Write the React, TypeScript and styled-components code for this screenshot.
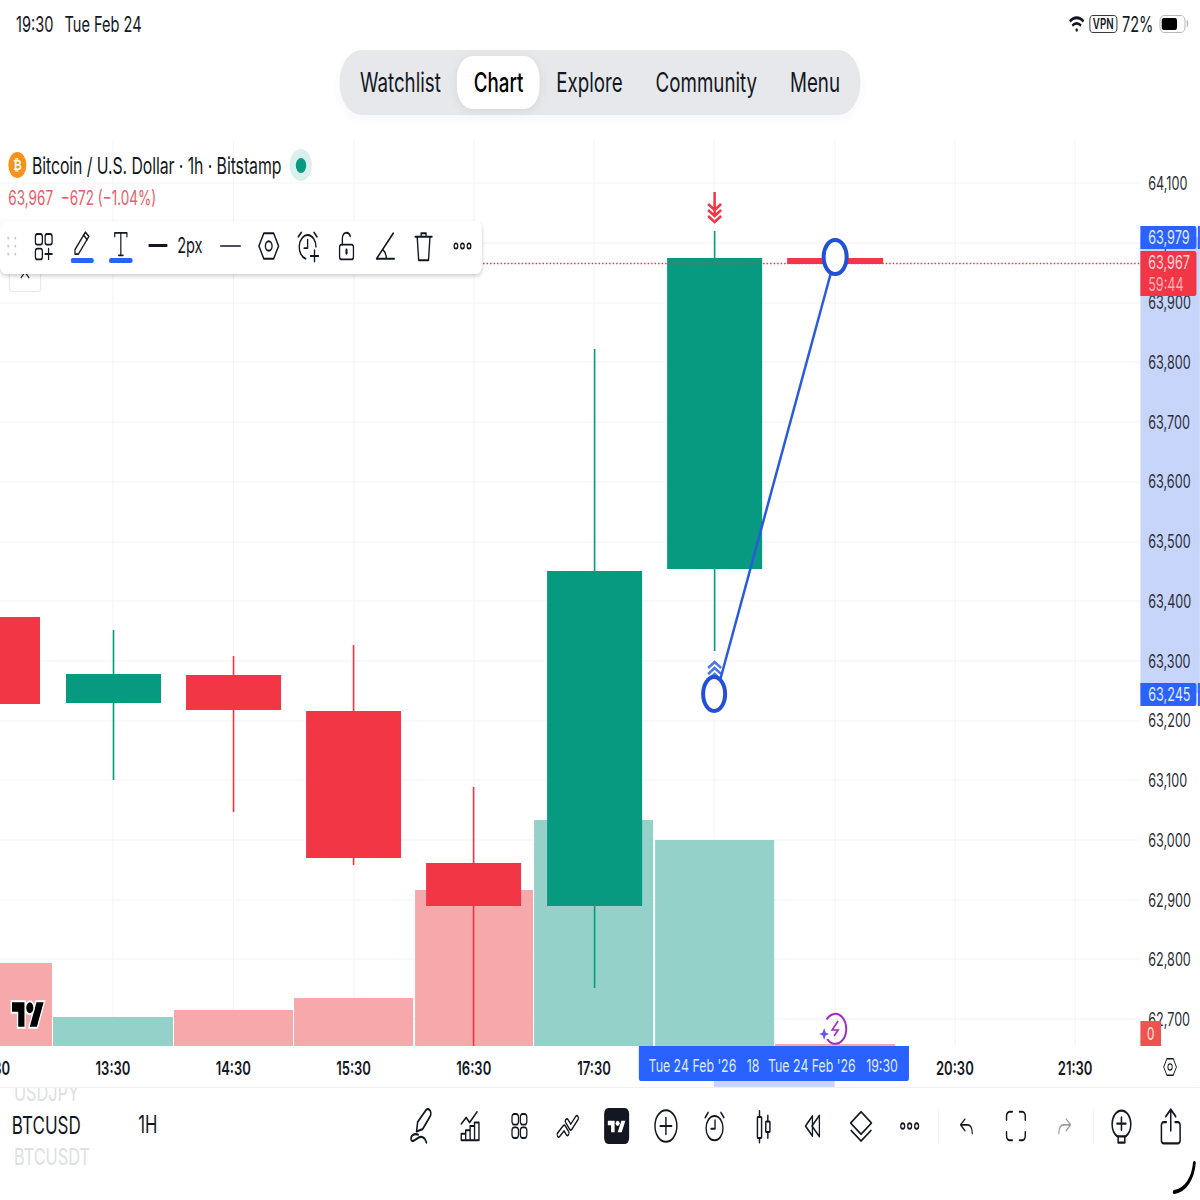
import React from 'react';
import styled, { createGlobalStyle } from 'styled-components';

// The screenshot is a tablet capture squeezed to a square, so the page is laid
// out 1728 wide and narrowed as a whole. The chart svg uses screenshot pixels.
const PRICES = ['64,100', '64,000', '63,900', '63,800', '63,700', '63,600', '63,500', '63,400', '63,300', '63,200', '63,100', '63,000', '62,900', '62,800', '62,700'];
// the two empty cells sit under the crosshair tag
const TIMES = ['12:30', '13:30', '14:30', '15:30', '16:30', '17:30', '', '', '20:30', '21:30'];
const GRID_X = [113, 233.5, 354, 474, 594, 714, 835, 955, 1075];
const GRID_Y = [183, 243, 303, 362, 422, 482, 542, 601, 661, 721, 780, 840, 900, 959, 1019];
const GREEN = '#089981';
const RED = '#f23645';

const VOLUMES = [
  { x: 0, w: 52, y: 963, up: false },
  { x: 53, w: 120, y: 1017, up: true },
  { x: 174, w: 119, y: 1010, up: false },
  { x: 294, w: 119, y: 998, up: false },
  { x: 415, w: 118, y: 890, up: false },
  { x: 534, w: 119, y: 820, up: true },
  { x: 655, w: 119, y: 840, up: true },
  { x: 775, w: 120, y: 1044, up: false },
];

const CANDLES = [
  { x: -55, wick: -7, top: 617, bottom: 704, wickTop: 617, wickBottom: 704, up: false },
  { x: 66, wick: 113, top: 674, bottom: 703, wickTop: 630, wickBottom: 780, up: true },
  { x: 186, wick: 233, top: 675, bottom: 710, wickTop: 656, wickBottom: 812, up: false },
  { x: 306, wick: 353, top: 711, bottom: 858, wickTop: 645, wickBottom: 865, up: false },
  { x: 426, wick: 473, top: 863, bottom: 906, wickTop: 787, wickBottom: 1046, up: false },
  { x: 547, wick: 594, top: 571, bottom: 906, wickTop: 349, wickBottom: 988, up: true },
  { x: 667, wick: 714, top: 258, bottom: 569, wickTop: 231, wickBottom: 651, up: true },
];

const GlobalStyle = createGlobalStyle`
  html, body {
    margin: 0;
    overflow: hidden;
    background: #fff;
  }
  body {
    font-family: Inter, "Liberation Sans", sans-serif;
    color: #131722;
  }
`;

const Page = styled.div`
  width: 1728px;
  height: 1200px;
  overflow: hidden;
  background: #fff;
  transform: scaleX(0.6944);
  transform-origin: 0 0;
  position: relative;
`;

const StatusBar = styled.div`
  height: 48px;
  display: flex;
  align-items: center;
  justify-content: space-between;
  padding: 0 21px 0 23px;
  box-sizing: border-box;
  font-size: 21px;
`;

const StatusGroup = styled.div`
  display: flex;
  align-items: center;
  gap: 16px;
`;

const StatusIcons = styled(StatusGroup)`
  gap: 7px;
`;

const Vpn = styled.span`
  border: 1.5px solid #131722;
  border-radius: 5px;
  font-size: 14px;
  font-weight: 600;
  line-height: 16px;
  padding: 0 4px;
`;

const Battery = styled.span`
  width: 37px;
  height: 18px;
  box-sizing: border-box;
  border: 1.5px solid #a9abb0;
  border-radius: 6px;
  padding: 2px;
  margin-left: 2px;
  position: relative;
  display: block;

  &::before {
    content: '';
    display: block;
    width: 72%;
    height: 100%;
    background: #000;
    border-radius: 3px;
  }

  &::after {
    content: '';
    position: absolute;
    right: -5px;
    top: 4px;
    width: 2px;
    height: 7px;
    background: #b5b7bb;
    border-radius: 0 2px 2px 0;
  }
`;

const NavRow = styled.div`
  height: 92px;
  display: flex;
  justify-content: center;
  align-items: flex-start;
  padding-top: 2px;
  box-sizing: border-box;
`;

const Nav = styled.nav`
  height: 65px;
  box-sizing: border-box;
  padding: 6px;
  background: #e6e8ec;
  border-radius: 32px;
  display: flex;
  box-shadow: 0 4px 14px rgba(0, 0, 0, 0.04);
`;

const NavItem = styled.div<{ $active?: boolean }>`
  display: flex;
  align-items: center;
  padding: 0 23.7px;
  font-size: 27px;
  font-weight: ${(p) => (p.$active ? 500 : 400)};
  color: ${(p) => (p.$active ? '#000' : '#131722')};
  background: ${(p) => (p.$active ? '#fff' : 'transparent')};
  border-radius: 22px;
  box-shadow: ${(p) => (p.$active ? '0 2px 14px rgba(0,0,0,0.07)' : 'none')};
`;

const ChartBlock = styled.div`
  display: grid;
  grid-template-columns: 1642px 86px;
  grid-template-rows: 906px 41px;
  position: relative;
`;

const Plot = styled.div`
  position: relative;
`;

const PlotSvg = styled.svg`
  display: block;
  width: 100%;
  height: 100%;
`;

const Legend = styled.div`
  position: absolute;
  left: 12px;
  top: 9px;
  display: flex;
  flex-direction: column;
  gap: 1px;
`;

const LegendTitle = styled.div`
  display: flex;
  align-items: center;
  height: 32px;
  font-size: 22.8px;
  letter-spacing: -0.1px;
`;

const CoinBadge = styled.span`
  width: 26px;
  height: 26px;
  margin-right: 8px;
  border-radius: 50%;
  background: #f7931a;
  color: #fff;
  font-family: 'DejaVu Sans', sans-serif;
  font-size: 15px;
  font-weight: 700;
  display: flex;
  align-items: center;
  justify-content: center;
`;

const StatusDot = styled.span`
  width: 32px;
  height: 32px;
  margin-left: 12px;
  border-radius: 50%;
  background: #daf0ec;
  display: flex;
  align-items: center;
  justify-content: center;

  &::before {
    content: '';
    width: 15px;
    height: 15px;
    border-radius: 50%;
    background: ${GREEN};
  }
`;

const LegendValues = styled.div`
  font-size: 19.5px;
  color: #f0596a;
  line-height: 32px;
  white-space: pre;
`;

const HiddenButton = styled.div`
  position: absolute;
  left: 13px;
  top: 122px;
  width: 46px;
  height: 30px;
  box-sizing: border-box;
  border: 1px solid #e0e3eb;
  border-radius: 4px;
  background: #fff;
  display: flex;
  justify-content: center;
  align-items: flex-start;
  padding-top: 7px;
`;

const DrawToolbar = styled.div`
  position: absolute;
  left: 0;
  top: 81px;
  width: 694px;
  height: 53px;
  padding-bottom: 4px;
  box-sizing: border-box;
  background: #fff;
  border-radius: 8px;
  box-shadow: 0 2px 5px rgba(0, 0, 0, 0.2);
  display: flex;
  align-items: center;
`;

const Handle = styled.div`
  width: 35px;
  display: flex;
  justify-content: center;
`;

const Tool = styled.div<{ $selected?: boolean }>`
  width: 56px;
  height: 49px;
  display: flex;
  align-items: center;
  justify-content: center;
  position: relative;
  padding-bottom: ${(p) => (p.$selected ? '3px' : '0')};
  box-sizing: border-box;

  &::after {
    content: ${(p) => (p.$selected ? "''" : 'none')};
    position: absolute;
    left: 11px;
    right: 11px;
    bottom: 7px;
    height: 5px;
    border-radius: 3px;
    background: #2962ff;
  }
`;

const LineWidth = styled.div`
  width: 102px;
  display: flex;
  align-items: center;
  justify-content: center;
  gap: 14px;
  font-size: 21px;

  &::before {
    content: '';
    width: 27px;
    height: 3px;
    background: #131722;
  }
`;

const PriceAxis = styled.div`
  position: relative;
  padding-top: 13.5px;
  box-sizing: border-box;
  overflow: hidden;
`;

const PriceRange = styled.div`
  position: absolute;
  left: 0;
  right: 0;
  top: 97px;
  height: 456px;
  background: #c7d5fa;
`;

const PriceLabel = styled.div`
  position: relative;
  height: 59.75px;
  line-height: 59.75px;
  padding-left: 11.5px;
  font-size: 18.2px;
  color: #2a2e39;
`;

const PriceTag = styled.div<{ $color: string }>`
  position: absolute;
  left: 0;
  width: 81px;
  box-sizing: border-box;
  padding-left: 11.5px;
  background: ${(p) => p.$color};
  border-radius: 0 3px 3px 0;
  font-size: 18.2px;
  line-height: 23px;
  color: #e2e9ff;
`;

const BlueTag = styled(PriceTag)`
  &::after {
    content: '';
    position: absolute;
    left: 83px;
    top: 0;
    width: 5px;
    height: 100%;
    background: #2962ff;
  }
`;

const Countdown = styled.div`
  color: #ffb0b5;
  line-height: 20px;
`;

const ZeroTag = styled.div`
  position: absolute;
  left: 0;
  top: 881px;
  width: 30px;
  height: 25px;
  background: #ef5350;
  color: #ffe3e3;
  font-size: 17px;
  display: flex;
  align-items: center;
  justify-content: center;
`;

const TimeAxis = styled.div`
  position: relative;
  display: flex;
  overflow: hidden;
`;

const TimeLabel = styled.div`
  flex: 0 0 173.2px;
  height: 41px;
  display: flex;
  align-items: center;
  justify-content: center;
  font-size: 18.8px;
  font-weight: 600;
  padding-top: 3px;
  box-sizing: border-box;

  &:first-child {
    margin-left: -97px;
  }
`;

const TimeRange = styled.div`
  position: absolute;
  left: 1028px;
  width: 174px;
  top: 35px;
  height: 6px;
  background: #c7d5fa;
`;

const TimeTag = styled.div`
  position: absolute;
  left: 920px;
  top: 0;
  width: 389px;
  height: 35px;
  padding-top: 3px;
  box-sizing: border-box;
  background: #2962ff;
  border-radius: 0 0 3px 3px;
  color: #dfe8ff;
  font-size: 17.8px;
  display: flex;
  align-items: center;
  white-space: pre;
`;

const TimeTagClipped = styled.div`
  width: 174px;
  margin-right: 12px;
  flex: none;
  padding-left: 14px;
  box-sizing: border-box;
  overflow: hidden;
`;

const AxisCorner = styled.div`
  display: flex;
  align-items: center;
  padding-left: 32px;
`;

const BottomBar = styled.div`
  height: 113px;
  border-top: 1.5px solid #eef0f3;
  box-sizing: border-box;
  display: flex;
  position: relative;
`;

const Symbols = styled.div`
  width: 199px;
  padding-left: 17px;
  box-sizing: border-box;
  overflow: hidden;
`;

const SymbolItem = styled.div<{ $current?: boolean }>`
  height: 32px;
  line-height: 32px;
  padding-left: ${(p) => (p.$current ? '0' : '3px')};
  font-size: ${(p) => (p.$current ? '24.5px' : '23.5px')};
  color: ${(p) => (p.$current ? '#131722' : '#dedfe2')};
  white-space: nowrap;

  &:first-child {
    margin-top: -11px;
  }
`;

const Interval = styled.div`
  width: 373px;
  font-size: 24px;
  line-height: 32px;
  padding-top: 21px;
  box-sizing: border-box;
`;

const Actions = styled.div`
  display: flex;
  align-items: flex-start;
  padding-top: 20px;
`;

const ActionCell = styled.div`
  width: 70.3px;
  height: 36px;
  display: flex;
  align-items: center;
  justify-content: center;
`;

const Separator = styled.div`
  width: 12px;
  height: 36px;
  display: flex;
  justify-content: center;

  &::before {
    content: '';
    width: 1px;
    background: #f1f2f4;
  }
`;

const TvButton = styled.div`
  width: 36px;
  height: 36px;
  background: #131722;
  border-radius: 6px;
  display: flex;
  align-items: center;
  justify-content: center;
`;

const HomeCorner = styled.svg`
  position: absolute;
  right: 4px;
  bottom: 6px;
  width: 36px;
  height: 34px;
`;

const Stroke = styled.svg<{ $muted?: boolean }>`
  display: block;
  fill: none;
  stroke: ${(p) => (p.$muted ? '#9a9da3' : '#131722')};
  stroke-width: 1.4;
  stroke-linecap: round;
  stroke-linejoin: round;
`;

const Icon = ({ size = 32, muted, children }: { size?: number; muted?: boolean; children: React.ReactNode }) => (
  <Stroke $muted={muted} width={size} height={size} viewBox="0 0 24 24">
    {children}
  </Stroke>
);

const TvLogo = ({ width, height, color }: { width: number; height: number; color: string }) => (
  <svg width={width} height={height} viewBox="0 3 36 20" preserveAspectRatio="none" fill={color}>
    <path d="M14 22H7V11H0V4h14v18zM28 22h-8l7.5-18h8L28 22z" />
    <circle cx="20" cy="8" r="4" />
  </svg>
);

const HexIcon = ({ size = 32 }: { size?: number }) => (
  <Icon size={size}>
    <path d="M7 3h10l5 9-5 9H7l-5-9z" />
    <circle cx="12" cy="12" r="3.4" />
  </Icon>
);

const DotsIcon = ({ size = 32 }: { size?: number }) => (
  <Icon size={size}>
    <circle cx="4.5" cy="12" r="2.1" />
    <circle cx="12" cy="12" r="2.1" />
    <circle cx="19.5" cy="12" r="2.1" />
  </Icon>
);

const BOTTOM_LEFT: React.ReactNode[] = [
  <Icon size={38} key="brush">
    <path d="M7.500 15.500 8.500 9.500 15.500 2.500a2.500 2.500 0 0 1 4.500 3.200L13 14z" />
    <path d="M9 17.500C5.500 16.500 2 18 2.500 20.500c.5 2 3.500.4 6-.8 3.200-1.500 6.500-1 8 2.800" />
  </Icon>,
  <Icon size={34} key="bars">
    <path d="M3 10.500 8 6l3.500 3.500L19 2" />
    <path d="M3 22v-4.500h4.500V22M7.500 22v-7H12v7M12 22V12h4.500v10M16.500 22V9.500H21V22H3" />
  </Icon>,
  <Icon size={32} key="grid">
    <rect x="4" y="3" width="7" height="8" rx="2.400" />
    <rect x="13" y="3" width="7" height="8" rx="2.400" />
    <rect x="4" y="13" width="7" height="8" rx="2.400" />
    <rect x="13" y="13" width="7" height="8" rx="2.400" />
  </Icon>,
  <Icon size={38} key="patterns">
    <path d="M3.500 17.500 8.500 13l3 3.500M11 9l3.500 4L20 7" strokeWidth="4" />
    <path d="M3.500 17.500 8.500 13l3 3.500M11 9l3.500 4L20 7" strokeWidth="1.800" stroke="#fff" />
  </Icon>,
  <TvButton key="tv">
    <TvLogo width={26} height={13} color="#fff" />
  </TvButton>,
  <Icon size={36} key="plus">
    <circle cx="12" cy="12" r="10.500" />
    <path d="M12 6.500v11M6.500 12h11" />
  </Icon>,
  <Icon size={34} key="alarm">
    <circle cx="12" cy="13.500" r="8.600" />
    <path d="M12.500 8v6H8.500M2.500 6 5.500 2.500M21.500 6l-3-3.500" />
  </Icon>,
  <Icon size={36} key="candles">
    <path d="M8.500 2v4M8.500 20v3M16.500 5v4M16.500 16v4" />
    <rect x="6.500" y="6" width="4" height="14" rx="0.500" />
    <rect x="14.500" y="9" width="4" height="7" rx="0.500" />
  </Icon>,
  <Icon size={32} key="replay">
    <path d="M12 4.500 4.500 12l7.500 7.500z" />
    <path d="M19.500 4 11.500 12l8 8z" />
  </Icon>,
  <Icon size={36} key="layers">
    <path d="M12 2.500 22 10l-10 7.500L2 10z" />
    <path d="M2.500 15 12 22l9.500-7" />
  </Icon>,
  <DotsIcon key="more" />,
];

const DrawTools = () => (
  <DrawToolbar>
    <Handle>
      <svg width="14" height="20" viewBox="0 0 14 20" fill="#c9ccd3">
        {[2, 10, 18].flatMap((y) => [2, 12].map((x) => <circle key={`${x}-${y}`} cx={x} cy={y} r="1.600" />))}
      </svg>
    </Handle>
    <Tool>
      <Icon size={32}>
        <rect x="3" y="3" width="7.500" height="8" rx="2" />
        <rect x="13.500" y="3" width="7.500" height="8" rx="2" />
        <rect x="3" y="14" width="7.500" height="8" rx="2" />
        <path d="M17.200 14v8M13.500 18h7.500" />
      </Icon>
    </Tool>
    <Tool $selected>
      <Icon size={30}>
        <path d="M4 16.500 16 2.500l4 3.500L8 20H4z" />
        <path d="m14 5 4 3.500" />
      </Icon>
    </Tool>
    <Tool $selected>
      <Icon size={30}>
        <path d="M5 6V3h14v3M12 3v18M9.500 21h5" />
      </Icon>
    </Tool>
    <LineWidth>2px</LineWidth>
    <Tool>
      <Icon size={36}>
        <path d="M2.500 12h19" strokeWidth="1" />
      </Icon>
    </Tool>
    <Tool>
      <HexIcon size={34} />
    </Tool>
    <Tool>
      <Icon size={34}>
        <path d="M10 21A8.500 8.500 0 1 1 20.500 12.500" />
        <path d="M12 7.500v6H8.500M2.500 5.500 5.500 2.500M21.500 5.500l-3-3M19 15v8M15 19h8" />
      </Icon>
    </Tool>
    <Tool>
      <Icon size={32}>
        <rect x="4.500" y="11" width="15" height="11" rx="2" />
        <path d="M7.500 11V6.500a4.500 4.500 0 0 1 8.600-1.800" />
        <path d="M12 15v2.500" strokeWidth="2.200" />
      </Icon>
    </Tool>
    <Tool>
      <Icon size={34}>
        <path d="M20 3 3 21h18M13 21c0-2.600-1-4.600-3-6" />
      </Icon>
    </Tool>
    <Tool>
      <Icon size={34}>
        <path d="M3.500 5.500h17M9.500 5.500V3h5v2.500M5.500 5.500 7 22h10l1.500-16.500" />
      </Icon>
    </Tool>
    <Tool>
      <DotsIcon size={30} />
    </Tool>
  </DrawToolbar>
);

const Chart = () => (
  <PlotSvg viewBox="0 140 1140 906" preserveAspectRatio="none">
    <g stroke="#f2f3f5" strokeWidth="1">
      {GRID_X.map((x) => <line key={x} x1={x} x2={x} y1={140} y2={1046} />)}
      {GRID_Y.map((y) => <line key={y} x1={0} x2={1140} y1={y} y2={y} />)}
    </g>
    {VOLUMES.map((v) => (
      <rect key={v.x} x={v.x} y={v.y} width={v.w} height={1046 - v.y} fill={v.up ? '#94d1c8' : '#f7a8ab'} />
    ))}
    {CANDLES.map((c) => (
      <g key={c.x} fill={c.up ? GREEN : RED}>
        <rect x={c.wick - 0.3} y={c.wickTop} width="1.6" height={c.wickBottom - c.wickTop} />
        <rect x={c.x} y={c.top} width="95" height={c.bottom - c.top} />
      </g>
    ))}
    <line x1="0" x2="1140" y1="263.500" y2="263.500" stroke={RED} strokeWidth="1.500" strokeDasharray="1.500 2" />
    <rect x="787" y="258" width="96" height="6" fill={RED} />
    <path d="M714.500 192v24M708 204l6.500 6 6.500-6M708 210l6.500 6 6.500-6M708 216l6.500 6 6.500-6" fill="none" stroke={RED} strokeWidth="2.500" />
    <path d="M708 668l6.500-6 6.500 6M708 674l6.500-6 6.500 6M708 680l6.500-6 6.500 6" fill="none" stroke="#4a78f0" strokeWidth="2.500" />
    <line x1="720" y1="680" x2="831" y2="272" stroke="#2a5bde" strokeWidth="2.500" />
    <ellipse cx="835" cy="257" rx="11.500" ry="17" fill="#fff" stroke="#2450d8" strokeWidth="4" />
    <ellipse cx="714" cy="694" rx="11" ry="17" fill="#fff" stroke="#2450d8" strokeWidth="4" />
    <g transform="translate(12 1001)">
      <g transform="scale(0.89 1.35)" fill="#000" stroke="#fff" strokeWidth="3" style={{ paintOrder: 'stroke' }}>
        <path d="M14 19H7V8H0V1h14v18zM28 19h-8l7.500-18h8L28 19z" />
        <circle cx="20" cy="5" r="4" />
      </g>
    </g>
    <path d="M826.500 1019.500A11 15 0 1 1 827 1039" fill="none" stroke="#a32cc4" strokeWidth="2" />
    <path d="M838 1021l-6 9h6l-4 6" fill="none" stroke="#a32cc4" strokeWidth="1.600" />
    <path d="M824 1028l1.500 4.500 3.500 1.500-3.500 1.500-1.500 4.500-1.500-4.500-3.500-1.500 3.500-1.500z" fill="#6a55f0" />
  </PlotSvg>
);

const App = () => (
  <Page>
    <GlobalStyle />
    <StatusBar>
      <StatusGroup>
        <span>19:30</span>
        <span>Tue Feb 24</span>
      </StatusGroup>
      <StatusIcons>
        <svg width="23" height="18" viewBox="0 0 22 16" fill="none" stroke="#131722" strokeWidth="2.800">
          <path d="M1.500 5.500c5.500-4.600 13.500-4.600 19 0M5 9.500c3.500-2.800 8.500-2.800 12 0" />
          <circle cx="11" cy="13.700" r="1.700" fill="#131722" stroke="none" />
        </svg>
        <Vpn>VPN</Vpn>
        <span>72%</span>
        <Battery />
      </StatusIcons>
    </StatusBar>
    <NavRow>
      <Nav>
        <NavItem>Watchlist</NavItem>
        <NavItem $active>Chart</NavItem>
        <NavItem>Explore</NavItem>
        <NavItem>Community</NavItem>
        <NavItem>Menu</NavItem>
      </Nav>
    </NavRow>
    <ChartBlock>
      <Plot>
        <Chart />
        <Legend>
          <LegendTitle>
            <CoinBadge>₿</CoinBadge>
            Bitcoin / U.S. Dollar · 1h · Bitstamp
            <StatusDot />
          </LegendTitle>
          <LegendValues>{'63,967  −672 (−1.04%)'}</LegendValues>
        </Legend>
        <HiddenButton>
          <svg width="18" height="10" viewBox="0 0 18 10" fill="none" stroke="#131722" strokeWidth="1.500">
            <path d="M3 8l6-6 6 6" />
          </svg>
        </HiddenButton>
        <DrawTools />
      </Plot>
      <PriceAxis>
        <PriceRange />
        {PRICES.map((p) => <PriceLabel key={p}>{p}</PriceLabel>)}
        <BlueTag $color="#2962ff" style={{ top: 86 }}>63,979</BlueTag>
        <PriceTag $color={RED} style={{ top: 111, color: '#ffd9dc', height: 45 }}>
          63,967
          <Countdown>59:44</Countdown>
        </PriceTag>
        <BlueTag $color="#2962ff" style={{ top: 543 }}>63,245</BlueTag>
        <ZeroTag>0</ZeroTag>
      </PriceAxis>
      <TimeAxis>
        {TIMES.map((t, i) => <TimeLabel key={i}>{t}</TimeLabel>)}
        <TimeRange />
        <TimeTag>
          <TimeTagClipped>{"Tue 24 Feb '26   18"}</TimeTagClipped>
          {"Tue 24 Feb '26   19:30"}
        </TimeTag>
      </TimeAxis>
      <AxisCorner>
        <HexIcon size={22} />
      </AxisCorner>
    </ChartBlock>
    <BottomBar>
      <Symbols>
        <SymbolItem>USDJPY</SymbolItem>
        <SymbolItem $current>BTCUSD</SymbolItem>
        <SymbolItem>BTCUSDT</SymbolItem>
      </Symbols>
      <Interval>1H</Interval>
      <Actions>
        {BOTTOM_LEFT.map((icon, i) => <ActionCell key={i}>{icon}</ActionCell>)}
        <Separator />
        <ActionCell>
          <Icon size={28}>
            <path d="M10 6 4.500 11l5.500 5M4.500 11H13c4 0 6 3 6 7.500" />
          </Icon>
        </ActionCell>
        <ActionCell>
          <Icon size={36}>
            <path d="M8.500 2.500H6A3 3 0 0 0 3 5.500V8M15.500 2.500H18a3 3 0 0 1 3 3V8M21 16v2.500a3 3 0 0 1-3 3h-2.500M8.500 21.500H6a3 3 0 0 1-3-3V16" />
          </Icon>
        </ActionCell>
        <ActionCell>
          <Icon size={28} muted>
            <path d="M14 6l5.500 5-5.500 5M19.500 11H11c-4 0-6 3-6 7.500" />
          </Icon>
        </ActionCell>
        <Separator />
        <ActionCell>
          <Icon size={38}>
            <path d="M8 18.500C5 16.800 3.500 14 3.500 10.800a8.500 8.500 0 0 1 17 0c0 3.200-1.500 6-4.500 7.700z" />
            <path d="M12 6.500v8M8 10.500h8M9 18.500v4h6v-4" />
          </Icon>
        </ActionCell>
        <ActionCell>
          <Icon size={38}>
            <path d="M12 15V1.500M7.500 6 12 1.500 16.500 6M8 9.500H5.500a2 2 0 0 0-2 2V21a2 2 0 0 0 2 2h13a2 2 0 0 0 2-2v-9.500a2 2 0 0 0-2-2H16" />
          </Icon>
        </ActionCell>
      </Actions>
      <HomeCorner viewBox="0 0 36 34" fill="none" stroke="#000" strokeWidth="4" strokeLinecap="round">
        <path d="M32 3C30 18 20 30 3 32" />
      </HomeCorner>
    </BottomBar>
  </Page>
);

export default App;
